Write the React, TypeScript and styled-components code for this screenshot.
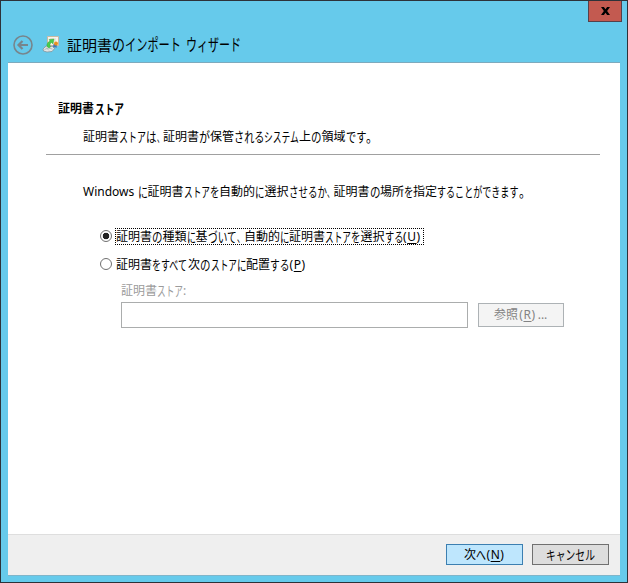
import React from "react";
import styled, { createGlobalStyle, css } from "styled-components";

const Global = createGlobalStyle`
  * { box-sizing: border-box; }
  body { margin: 0; }
`;

const Dialog = styled.div`
  width: 628px;
  height: 583px;
  padding: 0 7px 6px;
  display: flex;
  flex-direction: column;
  background: #66caeb;
  border: 1px solid #2d3239;
  font: 12px/18px "Noto Sans", "Noto Sans CJK JP", sans-serif;
  color: #000;
`;
const CaptionBar = styled.div`
  height: 21px;
  display: flex;
  justify-content: flex-end;
  margin-right: -2px;
`;
const CloseButton = styled.button`
  width: 34px;
  height: 21px;
  padding: 0;
  display: flex;
  align-items: center;
  justify-content: center;
  background: #c35a50;
  border: 1px solid #56404a;
  border-top: 0;
`;
const TitleBar = styled.header`
  height: 40px;
  padding: 5px 0 0 4px;
  display: flex;
  align-items: center;
  font-size: 15px;
  line-height: 22px;
`;
const BackIcon = styled.svg`
  width: 22px;
  height: 22px;
  margin-right: 8px;
`;
const WizardIcon = styled.svg`
  width: 18px;
  height: 18px;
  margin: 0 7px 2px 0;
`;
const Client = styled.main`
  flex: 1;
  display: flex;
  flex-direction: column;
  background: #fff;
  border-top: 1px solid #7daabd;
  border-bottom: 1px solid #7fb5ca;
`;
const Page = styled.div`
  flex: 1;
  padding: 37px 20px 0 38px;
`;
const Heading = styled.h1`
  margin: 0;
  padding-left: 12px;
  font-size: 12px;
  line-height: 18px;
  font-weight: 700;
`;
const Subheading = styled.div`
  padding: 10px 0 8px 37px;
  border-bottom: 1px solid #a0a0a0;
`;
const Intro = styled.div`
  padding: 28px 0 0 37px;
`;
const Options = styled.div`
  padding: 26px 0 0 54px;
  display: flex;
  flex-direction: column;
  gap: 10px;
`;
const Option = styled.div`
  height: 18px;
  display: flex;
  align-items: center;
`;
const RadioMark = styled.span<{ $on?: boolean }>`
  width: 12px;
  height: 12px;
  border: 1px solid #707070;
  border-radius: 50%;
  background: ${(p) => (p.$on ? "radial-gradient(circle, #222 3px, #fff 3.6px)" : "#fff")};
`;
const OptionText = styled.span<{ $focus?: boolean }>`
  height: 17px;
  align-self: flex-end;
  margin-left: 3px;
  padding-right: 1px;
  display: flex;
  line-height: 16px;
  border: 1px dotted ${(p) => (p.$focus ? "#000" : "transparent")};
`;
const FieldLabel = styled.div`
  padding: 9px 0 0 75px;
  color: #9b9b9b;
`;
const FieldRow = styled.div`
  padding: 2px 0 0 75px;
  display: flex;
  align-items: center;
  gap: 10px;
`;
const StoreField = styled.div`
  width: 347px;
  height: 26px;
  background: #fff;
  border: 1px solid #abadad;
`;
const Footer = styled.footer`
  height: 41px;
  padding: 9px 11px 0 0;
  display: flex;
  justify-content: flex-end;
  gap: 9px;
  background: #efefef;
  border-top: 1px solid #dedede;
`;
const Button = styled.button<{ $kind: "primary" | "normal" | "disabled" }>`
  width: ${(p) => (p.$kind === "disabled" ? 86 : 77)}px;
  height: ${(p) => (p.$kind === "disabled" ? 24 : 21)}px;
  padding: 0;
  display: flex;
  align-items: center;
  justify-content: center;
  font: inherit;
  color: ${(p) => (p.$kind === "disabled" ? "#838383" : "#000")};
  background: ${(p) => ({ primary: "#bee6fd", normal: "#dddddd", disabled: "#f4f4f4" })[p.$kind]};
  border: 1px solid ${(p) => ({ primary: "#3c7fb1", normal: "#707070", disabled: "#adb2b5" })[p.$kind]};
`;
const TextLine = styled.span`
  display: flex;
  white-space: pre;
`;
const Run = styled.span<{ $w: number }>`
  flex: none;
  width: ${(p) => p.$w}px;
  white-space: pre;
`;
/* Kana are drawn slightly larger than kanji and condensed to the run's advance. */
const Kana = styled(Run)<{ $n: number; $em: number }>`
  ${({ $w, $n, $em }) => {
    const size = $em * 1.1;
    return css`
      font-size: ${size}px;
      transform-origin: 0 50%;
      transform: scaleX(${$w / ($n * size)});
    `;
  }}
`;
const AccessKey = styled(Run)`
  letter-spacing: 0.6px;
`;
const Key = styled.span`
  text-decoration: underline;
  text-underline-offset: 2px;
  text-decoration-thickness: 1px;
`;

type Part = [string, number];
const Line = ({ parts, em = 12 }: { parts: Part[]; em?: number }) => (
  <TextLine>
    {parts.map(([text, w], i) => {
      const access = /^\((\w)\)$/.exec(text);
      if (access) {
        return (
          <AccessKey key={i} $w={w}>
            (<Key>{access[1]}</Key>)
          </AccessKey>
        );
      }
      if (/^[\u3001-\u30ff]+$/.test(text)) {
        return (
          <Kana key={i} $w={w} $n={text.length} $em={em}>
            {text}
          </Kana>
        );
      }
      return (
        <Run key={i} $w={w}>
          {text}
        </Run>
      );
    })}
  </TextLine>
);

export default function App() {
  return (
    <>
      <Global />
      <Dialog>
        <CaptionBar>
          <CloseButton aria-label="閉じる">
            <svg width="9" height="8" viewBox="0 0 10 8" preserveAspectRatio="none">
              <path d="M0 0h3.2L5 2.2 6.800 0H10L6.800 4 10 8H6.800L5 5.800 3.200 8H0l3.200-4z" fill="#000" />
            </svg>
          </CloseButton>
        </CaptionBar>
        <TitleBar>
          <BackIcon viewBox="0 0 22 22" fill="none" stroke="#77858c">
            <circle cx="11" cy="11" r="9" strokeWidth="1.6" />
            <path d="M16 11H7M10.5 7L6.5 11l4 4" strokeWidth="2.2" />
          </BackIcon>
          <WizardIcon viewBox="0 0 18 18">
            <path d="M5.500 1.500h11v9h-11z" fill="#f8f4ec" stroke="#c8b9a4" />
            <path d="M8 4h6M11 6h3" stroke="#dedad2" />
            <path d="M1 14l3-3 8 .5 1 1.500-3 3.500-5 .5-3.500-1z" fill="#e4e6e5" stroke="#7f8d92" strokeWidth=".7" />
            <path d="M2.500 14.500l4-1.500 4 1M4 12.500l3 3" stroke="#a9b0b2" strokeWidth=".8" fill="none" />
            <path d="M5 11.500C4.500 8.500 6 7 8 6L7 4.500l5-.5-1 5-1.300-1.500C8 8.500 7.500 9.500 8.500 12L7 13z" fill="#48cc4c" stroke="#2f9d3c" strokeWidth=".4" />
            <path d="M11.500 9l-.5 4 2-1 1.500 1 .5-4z" fill="#4576b5" />
            <circle cx="14" cy="8.500" r="2" fill="#e89020" />
          </WizardIcon>
          <Line em={15} parts={[["証明書", 45], ["の", 13], ["インポート", 56], [" ", 5], ["ウィザード", 55]]} />
        </TitleBar>
        <Client>
          <Page>
            <Heading>
              <Line parts={[["証明書", 37], ["ストア", 29]]} />
            </Heading>
            <Subheading>
              <Line
                parts={[
                  ["証明書", 36], ["ストア", 27], ["は", 10.5], ["、", 6.5], ["証明書", 36], ["が", 11], ["保管", 23.5],
                  ["される", 30.5], ["システム", 35], ["上", 12], ["の", 10.5], ["領域", 24], ["です", 20.5], ["。", 12],
                ]}
              />
            </Subheading>
            <Intro>
              <Line
                parts={[
                  ["Windows", 54.5], ["に", 10], ["証明書", 36], ["ストア", 26], ["を", 9.5], ["自動的", 36],
                  ["に", 9.5], ["選択", 24], ["させるか", 38], ["、", 7], ["証明書", 36], ["の", 10.5],
                  ["場所", 23.5], ["を", 9.5], ["指定", 24], ["することができます", 81.5], ["。", 12],
                ]}
              />
            </Intro>
            <Options>
              <Option>
                <RadioMark $on />
                <OptionText $focus>
                  <Line
                    parts={[
                      ["証明書", 36], ["の", 10.5], ["種類", 24], ["に", 9], ["基", 12], ["づいて", 29],
                      ["、", 7.5], ["自動的", 35.5], ["に", 9.5], ["証明書", 36], ["ストア", 26], ["を", 9.5],
                      ["選択", 24], ["する", 18.5], ["(U)", 18.5],
                    ]}
                  />
                </OptionText>
              </Option>
              <Option>
                <RadioMark />
                <OptionText>
                  <Line
                    parts={[
                      ["証明書", 36], ["をすべて", 36], ["次", 12], ["の", 10.5], ["ストア", 26], ["に", 9.5],
                      ["配置", 24], ["する", 19.5], ["(P)", 18],
                    ]}
                  />
                </OptionText>
              </Option>
            </Options>
            <FieldLabel>
              <Line parts={[["証明書", 36], ["ストア", 26], [":", 4]]} />
            </FieldLabel>
            <FieldRow>
              <StoreField />
              <Button $kind="disabled">
                <Line parts={[["参照", 24], ["(R)", 19], ["...", 11]]} />
              </Button>
            </FieldRow>
          </Page>
          <Footer>
            <Button $kind="primary">
              <Line parts={[["次", 12], ["へ", 10], ["(N)", 19]]} />
            </Button>
            <Button $kind="normal">
              <Line parts={[["キャンセル", 49]]} />
            </Button>
          </Footer>
        </Client>
      </Dialog>
    </>
  );
}
